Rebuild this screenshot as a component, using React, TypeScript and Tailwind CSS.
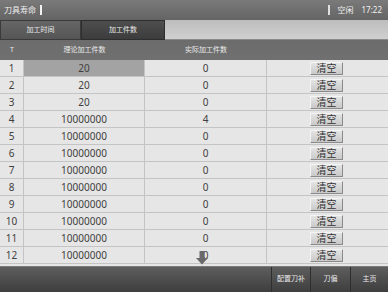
import React from "react";

const rows: [number, string, string][] = [
  [1, "20", "0"],
  [2, "20", "0"],
  [3, "20", "0"],
  [4, "10000000", "4"],
  [5, "10000000", "0"],
  [6, "10000000", "0"],
  [7, "10000000", "0"],
  [8, "10000000", "0"],
  [9, "10000000", "0"],
  [10, "10000000", "0"],
  [11, "10000000", "0"],
  [12, "10000000", "0"],
];

const font = { fontFamily: '"Noto Sans", "Noto Sans CJK SC", sans-serif' };

export default function App() {
  return (
    <div className="w-[388px] h-[292px] flex flex-col bg-[#e6e6e6] overflow-hidden relative" style={font}>
      {/* top bar */}
      <div className="h-[20px] flex items-center bg-gradient-to-b from-[#7a7a7a] to-[#646464] text-[#f0f0f0] text-[8px] px-[4px]">
        <span>刀具寿命</span>
        <span className="ml-[4px] w-[2px] h-[10px] bg-[#f2f2f2]" />
        <div className="flex-1" />
        <span className="w-[2px] h-[10px] bg-[#e0e0e0] mr-[8px]" />
        <span className="mr-[8px]">空闲</span>
        <span className="mr-[2px]">17:22</span>
      </div>
      {/* tabs */}
      <div className="h-[20px] flex bg-[#4a4a4a]">
        <div className="w-[81px] flex items-center justify-center text-[7px] text-[#e8e8e8] bg-gradient-to-b from-[#666] to-[#555] border border-[#3a3a3a]">加工时间</div>
        <div className="w-[84px] flex items-center justify-center text-[7px] text-[#e8e8e8] bg-gradient-to-b from-[#4e4e4e] to-[#3c3c3c] border border-[#2e2e2e]">加工件数</div>
        <div className="flex-1 bg-gradient-to-b from-[#bdbdbd] to-[#cfcfcf] border-b border-[#888]" />
      </div>
      {/* header */}
      <div className="h-[20px] flex items-center bg-gradient-to-b from-[#6c6c6c] to-[#707070] text-[7px] text-[#eaeaea]">
        <div className="w-[24px] text-center">T</div>
        <div className="w-[121px] text-center">理论加工件数</div>
        <div className="w-[122px] text-center">实际加工件数</div>
        <div className="flex-1" />
      </div>
      {/* rows */}
      <div className="flex flex-col">
        {rows.map(([n, a, b]) => (
          <div key={n} className="h-[17px] flex border-b border-[#c4c4c4] text-[10px] text-[#3f3f3f]">
            <div className="w-[24px] flex items-center justify-center border-r border-[#c4c4c4]">{n}</div>
            <div className={`w-[121px] flex items-center justify-center border-r border-[#c4c4c4] ${n === 1 ? "bg-[#a3a3a3]" : ""}`}>{a}</div>
            <div className="w-[122px] flex items-center justify-center border-r border-[#c4c4c4]">{b}</div>
            <div className="flex-1 flex items-center pl-[43px]">
              <div className="w-[33px] h-[13px] flex items-center justify-center bg-gradient-to-b from-[#e4e4e4] to-[#c9c9c9] border-r border-b border-[#8a8a8a] border-t border-l border-t-[#f4f4f4] border-l-[#f4f4f4] text-[10px] leading-none text-[#333]">清空</div>
            </div>
          </div>
        ))}
      </div>
      <div className="flex-1" />
      {/* bottom bar */}
      <div className="h-[26px] flex bg-gradient-to-b from-[#5e5e5e] to-[#3e3e3e] border-t border-[#7a7a7a] text-[7px] text-[#e8e8e8]">
        <div className="flex-1" />
        <div className="w-[39px] flex items-center justify-center border-l border-[#2e2e2e]">配置刀补</div>
        <div className="w-[40px] flex items-center justify-center border-l border-[#2e2e2e]">刀偏</div>
        <div className="w-[38px] flex items-center justify-center border-l border-[#2e2e2e]">主页</div>
      </div>
      {/* arrow cursor */}
      <svg className="absolute left-[196px] top-[251px]" width="12" height="14" viewBox="0 0 12 14">
        <path d="M3.5 0 H8.5 V7 H12 L6 13.5 L0 7 H3.5 Z" fill="#6a6a6a" />
      </svg>
    </div>
  );
}
